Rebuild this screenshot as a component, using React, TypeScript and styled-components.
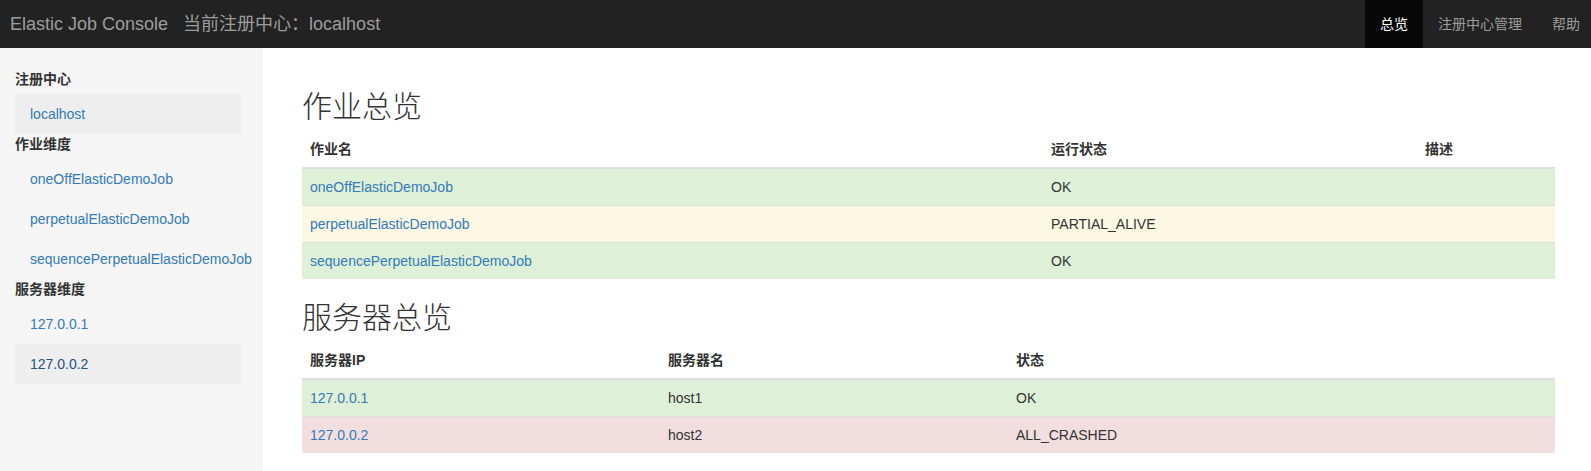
import React from "react";
import styled, { createGlobalStyle } from "styled-components";

const GlobalStyle = createGlobalStyle`
  html, body {
    margin: 0;
    padding: 0;
    background: #fff;
  }
  body {
    font-family: "Liberation Sans", "Noto Sans CJK SC", sans-serif;
    font-size: 14px;
    line-height: 20px;
    color: #333;
    overflow: hidden;
  }
  * { box-sizing: border-box; }
`;

const Navbar = styled.header`
  height: 48px;
  background: #222;
  display: flex;
  justify-content: space-between;
  align-items: stretch;
  overflow: hidden;
`;

const BrandGroup = styled.div`
  display: flex;
  align-items: center;
  padding-left: 10px;
  font-size: 18px;
  line-height: 20px;
  color: #9d9d9d;
`;

const BrandTitle = styled.span``;

const Registry = styled.span`
  margin-left: 15px;
`;

const NavList = styled.nav`
  display: flex;
  margin-right: -4px;
`;

const NavLink = styled.a<{ $active?: boolean }>`
  display: flex;
  align-items: center;
  padding: 0 15px;
  font-size: 14px;
  color: ${(p) => (p.$active ? "#fff" : "#9d9d9d")};
  background: ${(p) => (p.$active ? "#080808" : "transparent")};
  text-decoration: none;
  cursor: pointer;
`;

const Body = styled.div`
  display: flex;
  min-height: calc(100vh - 48px);
`;

const Sidebar = styled.aside`
  width: 262px;
  flex: none;
  background: #f5f5f5;
  border-right: 1px solid #eee;
  padding: 21px 0 0 15px;
`;

const SideHeader = styled.div`
  font-weight: bold;
  line-height: 21px;
  margin-bottom: 4px;
  color: #333;
`;

const SideList = styled.ul`
  list-style: none;
  margin: 0;
  padding: 0;
  width: 226px;
`;

const SideItem = styled.li<{ $highlight?: boolean; $hover?: boolean }>`
  height: 40px;
  padding: 10px 15px;
  line-height: 20px;
  white-space: nowrap;
  background: ${(p) => (p.$highlight ? "#eee" : "transparent")};
  color: ${(p) => (p.$hover ? "#23527c" : "#337ab7")};
  cursor: pointer;
`;

const Main = styled.main`
  flex: 1;
  min-width: 0;
  padding: 20px 36px 0 40px;
`;

const Title = styled.h2`
  font-size: 30px;
  line-height: 33px;
  font-weight: 300;
  margin: 20px 0 10px;
  color: #333;
  font-family: "Noto Sans CJK SC", sans-serif;
`;

const Table = styled.table`
  width: 100%;
  border-collapse: collapse;
  table-layout: fixed;
  margin-bottom: 20px;
`;

const Th = styled.th<{ $width?: number }>`
  width: ${(p) => (p.$width ? `${p.$width}px` : "auto")};
  text-align: left;
  padding: 8px;
  line-height: 20px;
  font-weight: bold;
  vertical-align: bottom;
  border-bottom: 2px solid #ddd;
  color: #333;
`;

const Tr = styled.tr<{ $tone: "success" | "warning" | "danger" }>`
  background: ${(p) =>
    p.$tone === "success" ? "#dff0d8" : p.$tone === "warning" ? "#fcf8e3" : "#f2dede"};
`;

const Td = styled.td`
  padding: 8px;
  line-height: 20px;
  border-top: 1px solid #ddd;
  white-space: nowrap;
`;

const Link = styled.a`
  color: #337ab7;
  text-decoration: none;
  cursor: pointer;
`;

const jobs: { name: string; status: string; tone: "success" | "warning" | "danger" }[] = [
  { name: "oneOffElasticDemoJob", status: "OK", tone: "success" },
  { name: "perpetualElasticDemoJob", status: "PARTIAL_ALIVE", tone: "warning" },
  { name: "sequencePerpetualElasticDemoJob", status: "OK", tone: "success" },
];

const servers: { ip: string; host: string; status: string; tone: "success" | "warning" | "danger" }[] = [
  { ip: "127.0.0.1", host: "host1", status: "OK", tone: "success" },
  { ip: "127.0.0.2", host: "host2", status: "ALL_CRASHED", tone: "danger" },
];

export default function App() {
  return (
    <>
      <GlobalStyle />
      <Navbar>
        <BrandGroup>
          <BrandTitle>Elastic Job Console</BrandTitle>
          <Registry>当前注册中心：localhost</Registry>
        </BrandGroup>
        <NavList>
          <NavLink $active>总览</NavLink>
          <NavLink>注册中心管理</NavLink>
          <NavLink>帮助</NavLink>
        </NavList>
      </Navbar>
      <Body>
        <Sidebar>
          <SideHeader>注册中心</SideHeader>
          <SideList>
            <SideItem $highlight>localhost</SideItem>
          </SideList>
          <SideHeader>作业维度</SideHeader>
          <SideList>
            {jobs.map((j) => (
              <SideItem key={j.name}>{j.name}</SideItem>
            ))}
          </SideList>
          <SideHeader>服务器维度</SideHeader>
          <SideList>
            <SideItem>127.0.0.1</SideItem>
            <SideItem $highlight $hover>127.0.0.2</SideItem>
          </SideList>
        </Sidebar>
        <Main>
          <Title>作业总览</Title>
          <Table>
            <thead>
              <tr>
                <Th $width={741}>作业名</Th>
                <Th $width={374}>运行状态</Th>
                <Th>描述</Th>
              </tr>
            </thead>
            <tbody>
              {jobs.map((j) => (
                <Tr key={j.name} $tone={j.tone}>
                  <Td>
                    <Link>{j.name}</Link>
                  </Td>
                  <Td>{j.status}</Td>
                  <Td></Td>
                </Tr>
              ))}
            </tbody>
          </Table>
          <Title>服务器总览</Title>
          <Table>
            <thead>
              <tr>
                <Th $width={358}>服务器IP</Th>
                <Th $width={348}>服务器名</Th>
                <Th>状态</Th>
              </tr>
            </thead>
            <tbody>
              {servers.map((s) => (
                <Tr key={s.ip} $tone={s.tone}>
                  <Td>
                    <Link>{s.ip}</Link>
                  </Td>
                  <Td>{s.host}</Td>
                  <Td>{s.status}</Td>
                </Tr>
              ))}
            </tbody>
          </Table>
        </Main>
      </Body>
    </>
  );
}
